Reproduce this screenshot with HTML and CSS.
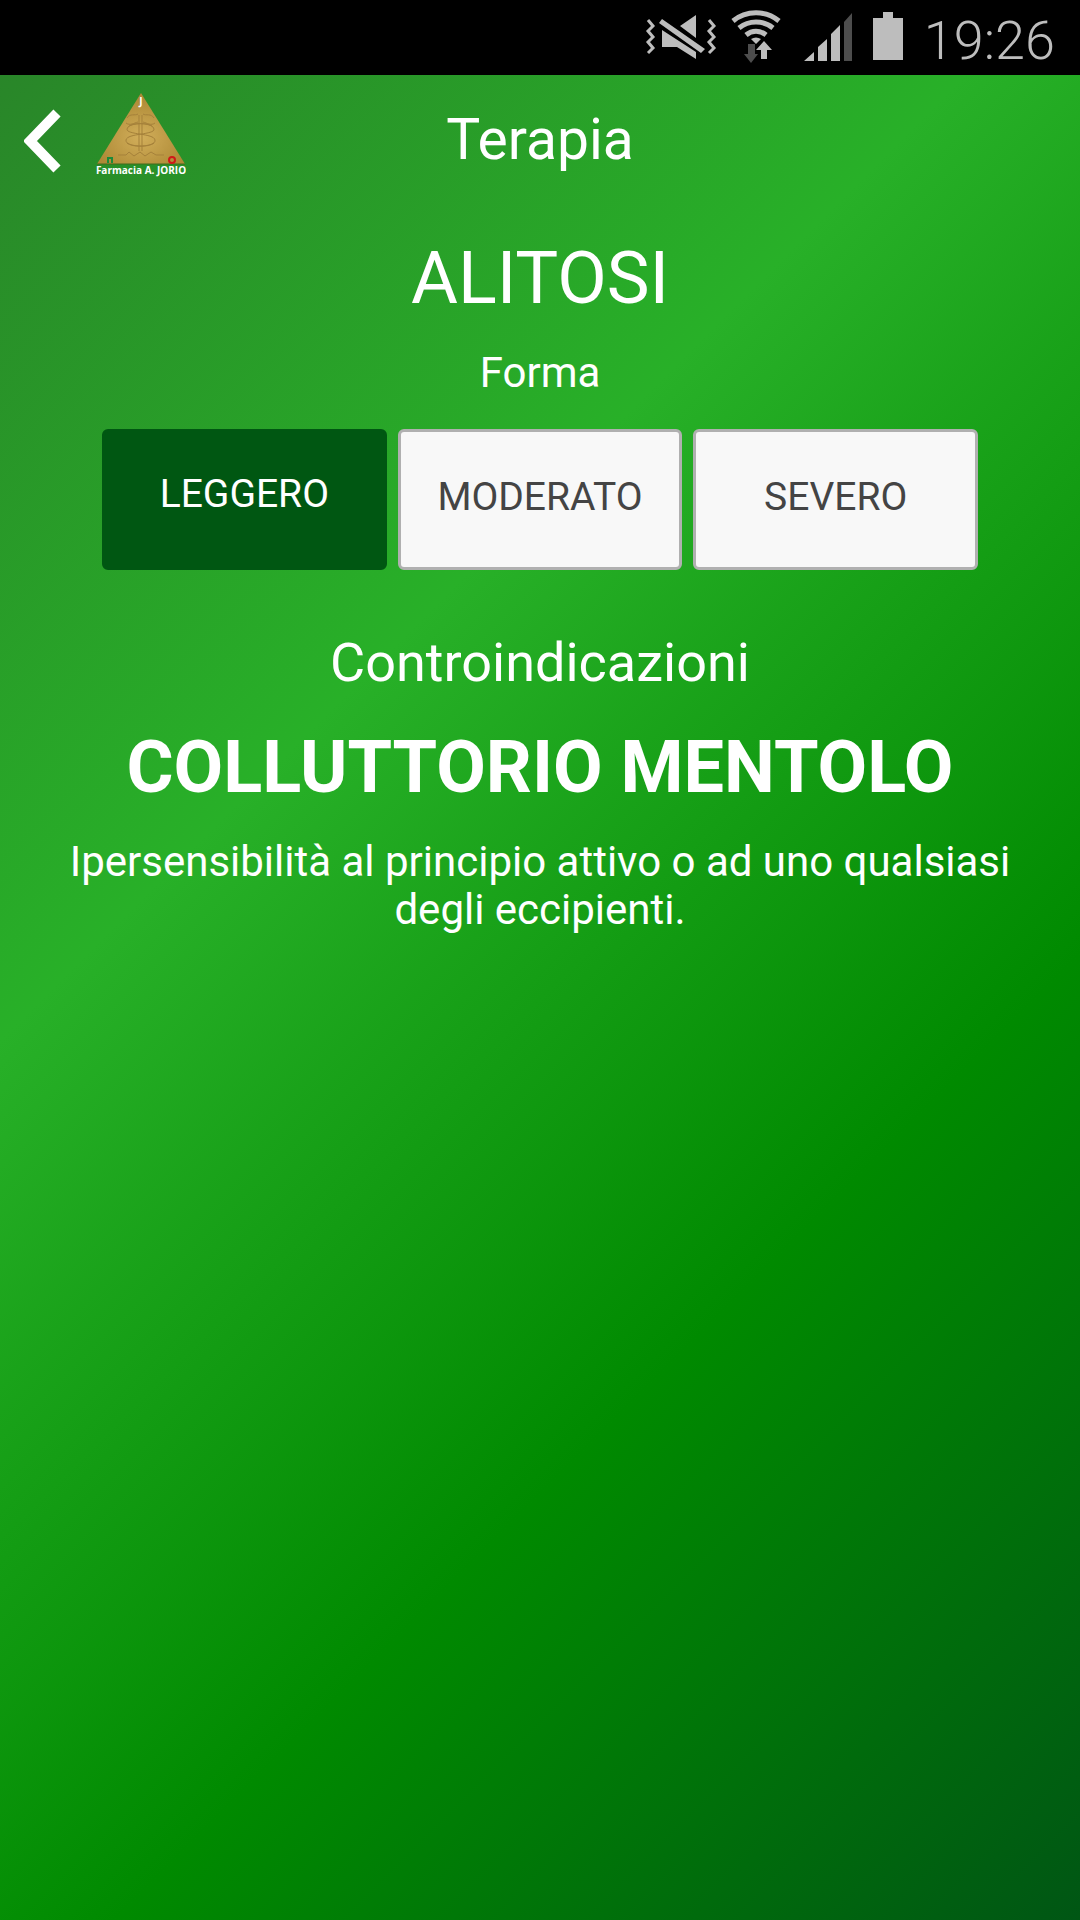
FILE: index.html
```html
<!DOCTYPE html>
<html lang="it">
<head>
<meta charset="utf-8">
<meta name="viewport" content="width=device-width, initial-scale=1">
<title>Terapia</title>
<link rel="stylesheet" href="styles.css">
</head>
<body>
<div class="status-bar">
  <svg class="status-icons" width="280" height="75" viewBox="0 0 280 75" aria-hidden="true">
    <g fill="none" stroke="#bdbdbd" stroke-width="3">
      <path d="M18 20l5 6-5 5 5 6-5 5 5 6-5 5"/>
      <path d="M79 20l5 6-5 5 5 6-5 5 5 6-5 5"/>
    </g>
    <g fill="#bdbdbd">
      <path d="M32 30v17h15l19 12v-7zM50 26l16-11v23zM32 19l-3 4 42 30 4-4z"/>
      <path d="M243 18h10v-6h10v6h10v42h-30z"/>
      <path d="M174 61h10v-9zM188 61h9V39l-9 8zM201 61h9V25l-9 9z"/>
      <path d="M134 41l8 9h-5v9h-6v-9h-5z"/>
      <path d="M121 39q5-3 10 0l-5 5z"/>
    </g>
    <path fill="#4d4d4d" d="M214 61h8V13l-8 9zM118 44h7v10h3l-7 9-7-9h4z"/>
    <g fill="none" stroke="#bdbdbd" stroke-width="5">
      <path d="M103 21c13-11 33-11 46 0"/>
      <path d="M109 28c10-8 24-8 34 0"/>
      <path d="M116 35c6-5 14-5 20 0"/>
    </g>
  </svg>
  <time class="clock">19:26</time>
</div>
<div class="screen">
  <header class="app-bar">
    <div class="brand">
      <button class="back" type="button" aria-label="Indietro">
        <svg width="40" height="68" viewBox="0 0 40 68" aria-hidden="true"><path d="M33 7L6 35l27 28" fill="none" stroke="#fff" stroke-width="10"/></svg>
      </button>
      <svg class="logo" width="90" height="94" viewBox="0 0 90 94" role="img" aria-label="Farmacia A. JORIO">
        <defs>
          <radialGradient id="gold" cx=".5" cy=".62" r=".55">
            <stop offset="0" stop-color="#d2ae5a"/>
            <stop offset="1" stop-color="#ae8a36"/>
          </radialGradient>
        </defs>
        <path d="M45 0l44 71H1z" fill="url(#gold)"/>
        <g fill="none" stroke="#a5813a" stroke-width="1">
          <path d="M43 22v36M46 22v36"/>
          <path d="M31 25c3-5 8-2 11-4M58 25c-3-5-8-2-11-4M30 30c4 3 8 0 12-1M59 30c-4 3-8 0-12-1"/>
          <path d="M56 33c-8-4-24-3-25 3s27 4 28 11-20 8-28 3"/>
          <path d="M33 33c8-4 24-3 25 3s-27 4-28 11 20 8 28 3"/>
          <path d="M22 62h8l3-3 5 4 6-4 5 4 6-4 5 3h8"/>
        </g>
        <path d="M1 71h88" stroke="#426b1d" stroke-width="1"/>
        <path d="M12 70v-5h4v5" fill="none" stroke="#1c8a3a" stroke-width="2"/>
        <circle cx="76" cy="67" r="3" fill="none" stroke="#d01818" stroke-width="2"/>
        <text class="logo-text" x="45" y="12">J</text>
        <text class="logo-text" x="45" y="81">Farmacia A. JORIO</text>
      </svg>
    </div>
    <h1 class="title">Terapia</h1>
  </header>
  <main class="content">
    <h2 class="condition">ALITOSI</h2>
    <p class="label">Forma</p>
    <div class="forms" role="group" aria-label="Forma">
      <button class="form-option selected" type="button" aria-pressed="true">LEGGERO</button>
      <button class="form-option" type="button" aria-pressed="false">MODERATO</button>
      <button class="form-option" type="button" aria-pressed="false">SEVERO</button>
    </div>
    <h3 class="section">Controindicazioni</h3>
    <h2 class="product">COLLUTTORIO MENTOLO</h2>
    <p class="text">Ipersensibilità al principio attivo o ad uno qualsiasi degli eccipienti.</p>
  </main>
</div>
</body>
</html>
```
FILE: styles.css
```css
* {
  box-sizing: border-box;
  margin: 0;
}

body {
  display: flex;
  flex-direction: column;
  min-height: 100vh;
  background: #000;
  color: #fff;
  font-family: Roboto, "Liberation Sans", sans-serif;
  text-align: center;
}

.status-bar {
  display: flex;
  justify-content: flex-end;
  align-items: center;
  gap: 14px;
  height: 75px;
  padding-right: 25px;
  color: #bdbdbd;
}

.status-icons {
  flex: none;
}

.clock {
  padding-top: 6px;
  font-size: 54px;
  font-weight: 300;
  line-height: 64px;
}

.screen {
  flex: 1;
  background: linear-gradient(135deg, #298629 0%, #28b028 33%, #008a00 67%, #005614 100%);
}

.app-bar {
  display: grid;
  grid-template-columns: 1fr auto 1fr;
  align-items: center;
  height: 130px;
}

.brand {
  display: flex;
  align-items: center;
  gap: 32px;
  padding-left: 24px;
}

.back {
  display: flex;
  padding: 0;
  border: 0;
  background: none;
}

.logo-text {
  fill: #fff;
  font-family: "Open Sans", sans-serif;
  font-size: 10px;
  font-weight: 700;
  text-anchor: middle;
}

.title {
  font-size: 57px;
  font-weight: 400;
  line-height: 68px;
}

.content {
  padding: 30px 64px;
}

.condition {
  font-size: 72px;
  font-weight: 400;
  line-height: 88px;
}

.label {
  margin-top: 26px;
  font-size: 42px;
  line-height: 48px;
}

.forms {
  display: grid;
  grid-template-columns: repeat(3, 1fr);
  gap: 11px;
  margin: 32px 38px 0;
}

.form-option {
  height: 141px;
  padding: 0 0 6px;
  border: 3px solid #b0b0b0;
  border-radius: 6px;
  background: #f8f8f8;
  color: #444;
  font-family: inherit;
  font-size: 39px;
  line-height: 48px;
}

.selected {
  padding-bottom: 12px;
  border-color: #005712;
  background: #005712;
  color: #fff;
}

.section {
  margin-top: 61px;
  font-size: 54px;
  font-weight: 400;
  line-height: 64px;
}

.product {
  margin-top: 29px;
  font-size: 72px;
  font-weight: 700;
  line-height: 88px;
}

.text {
  margin-top: 26px;
  font-size: 42px;
  line-height: 48px;
}
```
